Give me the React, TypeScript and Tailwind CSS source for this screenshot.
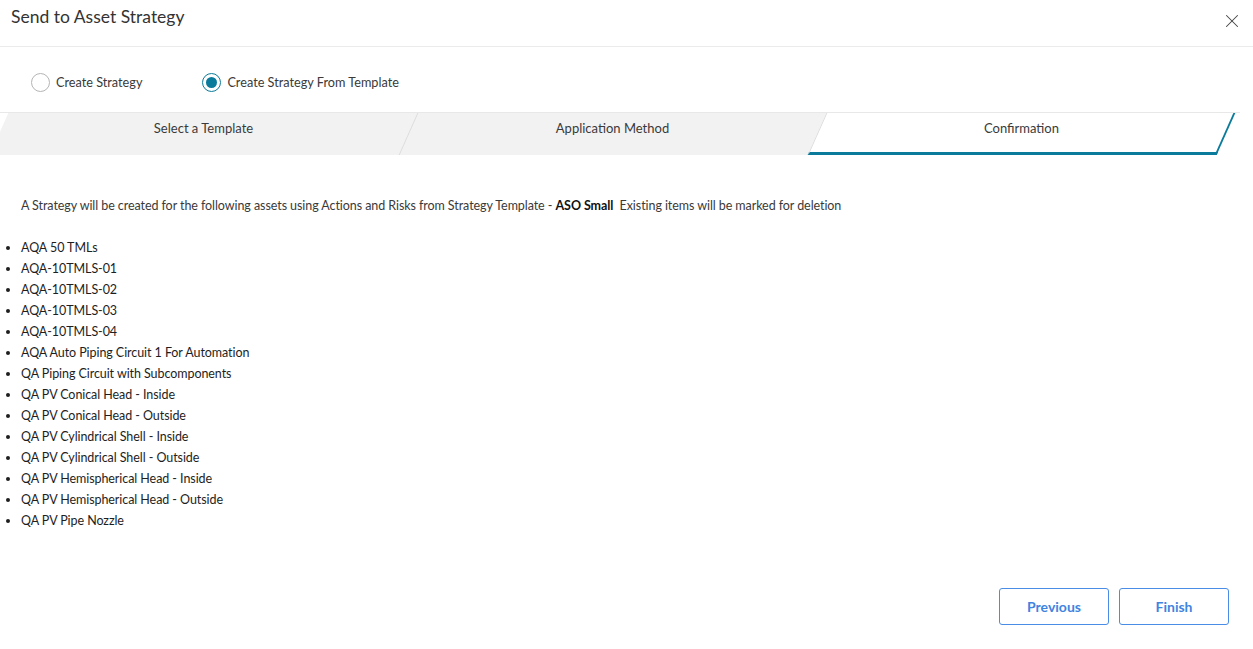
import { X } from "lucide-react";

const assets = [
    "AQA 50 TMLs",
    "AQA-10TMLS-01",
    "AQA-10TMLS-02",
    "AQA-10TMLS-03",
    "AQA-10TMLS-04",
    "AQA Auto Piping Circuit 1 For Automation",
    "QA Piping Circuit with Subcomponents",
    "QA PV Conical Head - Inside",
    "QA PV Conical Head - Outside",
    "QA PV Cylindrical Shell - Inside",
    "QA PV Cylindrical Shell - Outside",
    "QA PV Hemispherical Head - Inside",
    "QA PV Hemispherical Head - Outside",
    "QA PV Pipe Nozzle",
];

function Radio({ checked, label }: { checked?: boolean; label: string }) {
    return (
        <label className="flex items-center gap-[6px] cursor-pointer">
            <span
                className={
                    checked
                        ? "flex h-[19px] w-[19px] items-center justify-center rounded-full border border-[#0b7b9b]"
                        : "flex h-[19px] w-[19px] items-center justify-center rounded-full border border-[#b5b5b5]"
                }
            >
                {checked && <span className="h-[11px] w-[11px] rounded-full bg-[#0b7b9b]" />}
            </span>
            <span className="text-[12.7px] text-[#3a3a3a]">{label}</span>
        </label>
    );
}

export default function App() {
    return (
        <div className="h-[649px] w-[1253px] bg-white font-['Lato',sans-serif] text-[#333] overflow-hidden">
            <div className="flex h-[47px] items-start justify-between border-b border-[#ebebeb] pl-[11px] pr-[10px] pt-[4px]">
                <h1 className="text-[17.5px] text-[#333]">Send to Asset Strategy</h1>
                <button className="mt-[6px] text-[#444]">
                    <X className="h-[22px] w-[22px]" strokeWidth={1.1} />
                </button>
            </div>

            <div className="flex h-[65px] items-center gap-[60px] pl-[31px] pt-[6px]">
                <Radio label="Create Strategy" />
                <Radio checked label="Create Strategy From Template" />
            </div>

            <div className="flex h-[43px] w-[1240px] overflow-hidden border-t border-[#e8e8e8]">
                <div className="relative ml-[-1px] flex w-[409px] shrink-0 justify-center pt-[6px]">
                    <div className="absolute inset-0 -skew-x-[24deg] bg-[#f2f2f2]" />
                    <span className="relative text-[13px] text-[#3a3a3a]">Select a Template</span>
                </div>
                <div className="relative flex w-[409px] shrink-0 justify-center pt-[6px]">
                    <div className="absolute inset-0 -skew-x-[24deg] border-l border-[#dcdcdc] bg-[#f2f2f2]" />
                    <span className="relative text-[13px] text-[#3a3a3a]">Application Method</span>
                </div>
                <div className="relative flex w-[409px] shrink-0 justify-center pt-[6px]">
                    <div className="absolute inset-0 -skew-x-[24deg] border-b-[3px] border-l border-r-[2px] border-b-[#0b7b9b] border-l-[#dcdcdc] border-r-[#0b7b9b] bg-white" />
                    <span className="relative text-[13px] text-[#3a3a3a]">Confirmation</span>
                </div>
            </div>

            <div className="px-[21px] pt-[42px] text-[12.5px] tracking-[-0.07px] text-[#3a3a3a]">
                <p>
                    A Strategy will be created for the following assets using Actions and Risks from Strategy Template -{" "}
                    <span className="font-bold text-[#111]">ASO Small</span>&nbsp; Existing items will be marked for deletion
                </p>
            </div>

            <ul className="mt-[21px] list-disc pl-[21px] text-[12.5px] tracking-[-0.07px] text-[#1e1e1e]">
                {assets.map((a) => (
                    <li key={a} className="h-[21px] leading-[21px]">
                        {a}
                    </li>
                ))}
            </ul>

            <div className="mt-[57px] flex justify-end gap-[10px] pr-[24px]">
                <button className="h-[37px] w-[110px] rounded-[3px] border border-[#4a8de6] text-[14px] font-bold text-[#3f84e0]">
                    Previous
                </button>
                <button className="h-[37px] w-[110px] rounded-[3px] border border-[#4a8de6] text-[14px] font-bold text-[#3f84e0]">
                    Finish
                </button>
            </div>
        </div>
    );
}
